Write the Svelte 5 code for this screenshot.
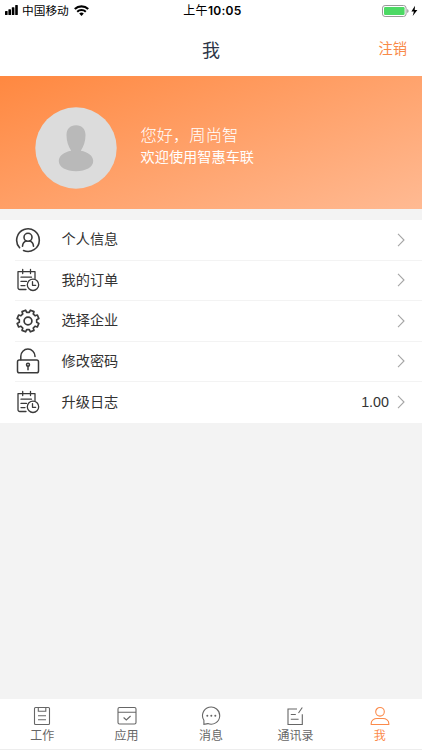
<script lang="ts">
  type MenuItem = { icon: string; label: string; value?: string };

  const menu: MenuItem[] = [
    { icon: 'user', label: '个人信息' },
    { icon: 'order', label: '我的订单' },
    { icon: 'gear', label: '选择企业' },
    { icon: 'lock', label: '修改密码' },
    { icon: 'order', label: '升级日志', value: '1.00' },
  ];

  const tabs = [
    { id: 'work', label: '工作' },
    { id: 'apps', label: '应用' },
    { id: 'message', label: '消息' },
    { id: 'contacts', label: '通讯录' },
    { id: 'me', label: '我' },
  ];

  let active = $state('me');

  // eight teeth, four corners each: [angle offset, radius]
  function gearPath(cx: number, cy: number) {
    const corners = [[-14, 8.8], [-10, 11.1], [10, 11.1], [14, 8.8]];
    const points: string[] = [];
    for (let i = 0; i < 8; i++) {
      for (const [offset, r] of corners) {
        const a = ((i * 45 + 22.5 + offset) * Math.PI) / 180;
        points.push((cx + r * Math.cos(a)).toFixed(2) + ' ' + (cy + r * Math.sin(a)).toFixed(2));
      }
    }
    return 'M' + points.join('L') + 'z';
  }
</script>

<div class="screen">
  <div class="status-bar">
    <div class="carrier">
      <svg width="13" height="10" viewBox="0 0 13 10">
        <rect x="0" y="6" width="2.6" height="4" rx="0.6"/>
        <rect x="3.4" y="4.2" width="2.6" height="5.8" rx="0.6"/>
        <rect x="6.8" y="2.2" width="2.6" height="7.8" rx="0.6"/>
        <rect x="10.2" y="0" width="2.6" height="10" rx="0.6"/>
      </svg>
      <span>中国移动</span>
      <svg class="wifi" width="15" height="11" viewBox="0 0 15 11">
        <path d="M.8 4a9.600 9.600 0 0 1 13.400 0" fill="none" stroke="#000" stroke-width="2.2"/>
        <path d="M3.200 6.700a6.200 6.200 0 0 1 8.600 0" fill="none" stroke="#000" stroke-width="2"/>
        <path d="M5.200 8.500a3.300 3.300 0 0 1 4.600 0L7.500 11z"/>
      </svg>
    </div>
    <span class="time">上午<b>10:05</b></span>
    <div class="power">
      <svg width="36" height="12" viewBox="0 0 36 12">
        <rect x="0.5" y="0.5" width="23.6" height="11" rx="2.6" fill="#fff" stroke="#999"/>
        <rect x="2" y="2" width="20.6" height="8" rx="1.2" fill="#4cd964"/>
        <path d="M25.2 4v4q1.4-.6 1.4-2t-1.4-2z" fill="#999"/>
        <path d="M33 .8L29.4 6.6h2.5L30.7 11l4.7-6h-2.7z"/>
      </svg>
    </div>
  </div>

  <header class="nav">
    <h1>我</h1>
    <button class="logout">注销</button>
  </header>

  <section class="profile">
    <svg class="avatar" width="82" height="82" viewBox="0 0 82 82">
      <circle cx="41" cy="41" r="40.7" fill="#dcdcdc"/>
      <path d="M41 18.3c6 0 9.5 3.8 9.5 9.8 0 6.200-1.800 11.500-4.700 15.700C53 45 58.200 49 58.200 54c0 6-7.500 10.300-17.200 10.300S23.800 60 23.800 54c0-5 5.200-9 12.400-10.200C33.300 39.600 31.500 34.300 31.500 28.100c0-6 3.500-9.800 9.500-9.800z" fill="#b9b9b9"/>
    </svg>
    <div class="greeting">
      <p class="name">您好，周尚智</p>
      <p class="welcome">欢迎使用智惠车联</p>
    </div>
  </section>

  <ul class="menu">
    {#each menu as item}
      <li>
        <svg class="menu-icon" width="26" height="26" viewBox="0 0 26 26">
          {#if item.icon === 'user'}
            <path d="M4.600 20.700A11.300 11.300 0 1 1 8.500 23.500" stroke-width="1.6"/>
            <circle cx="13" cy="10.300" r="4" stroke-width="1.600"/>
            <path d="M7.500 19.300c.2-3 1.700-4.800 4-5.300M18.500 19.300c-.2-3-1.700-4.800-4-5.300" stroke-width="1.600"/>
          {:else if item.icon === 'order'}
            <path d="M11 22.500H4.800a1.800 1.800 0 0 1-1.800-1.800V4.600h17V11.500M7.700 2.500v4M15.500 2.500v4"/>
            <path d="M6 10.200h10.500M6 14.400h5.500M6 18.600h4"/>
            <circle cx="18" cy="17.800" r="5.700"/>
            <path d="M17.500 14.600v3.700h3.200"/>
          {:else if item.icon === 'gear'}
            <path d={gearPath(13, 13)} stroke-width="1.700"/>
            <circle cx="13" cy="13" r="3.900" stroke-width="1.700"/>
          {:else}
            <rect x="2.500" y="12" width="21" height="12.800" rx="1.800" stroke-width="1.500"/>
            <path d="M5.800 11.800V8.200a7.100 7.100 0 0 1 14.200 0v.4" stroke-width="1.500"/>
            <circle cx="13" cy="16.700" r="1.500" stroke-width="1.500"/>
            <path d="M13 18v3.800" stroke-width="1.500"/>
          {/if}
        </svg>
        <span class="label">{item.label}</span>
        {#if item.value}
          <span class="value">{item.value}</span>
        {/if}
        <svg class="arrow" width="8" height="14" viewBox="0 0 8 14">
          <path d="M1 .9l6 6.100-6 6.100"/>
        </svg>
      </li>
    {/each}
  </ul>

  <nav class="tabs">
    {#each tabs as tab}
      <button class="tab" class:active={active === tab.id} onclick={() => active = tab.id}>
        <svg width="20" height="20" viewBox="0 0 20 20">
          {#if tab.id === 'work'}
            <rect x="2.500" y="1.500" width="15" height="17" rx="1"/>
            <path d="M6.300 1.500v3.700h7.500V1.500M6 9.700h8M6 13.700h8"/>
          {:else if tab.id === 'apps'}
            <rect x="1" y="1.500" width="18" height="16.500" rx="1.500"/>
            <path d="M1 6.200h18M6.600 11.500l2.700 2.500 4.300-4"/>
          {:else if tab.id === 'message'}
            <path d="M2.900 18.300v-4a8.600 8.600 0 1 1 4 3.300z"/>
            <g class="dots">
              <circle cx="6.300" cy="9.800" r="1"/>
              <circle cx="10.300" cy="9.800" r="1"/>
              <circle cx="14.300" cy="9.800" r="1"/>
            </g>
          {:else if tab.id === 'contacts'}
            <path d="M12 3H3v15.500h14.300V8.300M5.800 8.500h5M5.800 13.300h7.800M17.300 1.500l-3.800 5.500"/>
          {:else}
            <circle cx="10" cy="5.800" r="4.300"/>
            <path d="M1.200 18.500v-1.300c0-2.600 2.700-4.700 5.800-4.700h6c3.100 0 5.800 2.100 5.800 4.700v1.300z"/>
          {/if}
        </svg>
        <span>{tab.label}</span>
      </button>
    {/each}
  </nav>
</div>

<style>
  :global(body) {
    margin: 0;
    background: #f3f3f3;
  }

  .screen {
    display: flex;
    flex-direction: column;
    height: 750px;
    background: #f3f3f3;
    color: #333;
    font-family: "Noto Sans CJK SC", sans-serif;
  }

  button {
    padding: 0;
    border: none;
    background: none;
    font-family: inherit;
    cursor: pointer;
  }

  .status-bar {
    display: grid;
    grid-template-columns: 1fr auto 1fr;
    align-items: center;
    height: 21px;
    padding: 0 4px 0 5px;
    background: #fff;
    color: #000;
    font-size: 12px;
    line-height: 20px;
  }

  .carrier {
    display: flex;
    align-items: center;
    gap: 4px;
    font-size: 11.700px;
    line-height: 18px;
    padding-bottom: 1px;
  }

  .wifi {
    margin-left: 1px;
  }

  .time {
    padding-left: 2px;
    font-family: Inter, "Noto Sans CJK SC", sans-serif;
    letter-spacing: 0.3px;
  }

  .time b {
    font-weight: 600;
  }

  .power {
    display: flex;
    justify-content: flex-end;
  }

  .nav {
    display: grid;
    grid-template-columns: 1fr auto 1fr;
    align-items: center;
    height: 55px;
    padding: 0 15px;
    box-sizing: border-box;
    background: #fff;
  }

  h1 {
    grid-column: 2;
    margin: 0;
    color: #2c3548;
    font-size: 18px;
    font-weight: 400;
    line-height: 26px;
  }

  .logout {
    justify-self: end;
    color: #f98a48;
    font-size: 14.300px;
    font-weight: 400;
    line-height: 20px;
    padding-bottom: 1px;
  }

  .profile {
    display: flex;
    align-items: center;
    gap: 23.500px;
    height: 133px;
    padding: 10px 0 0 35px;
    box-sizing: border-box;
    background: linear-gradient(160deg, #ff8840 0%, #ffba93 100%);
    color: #fff;
  }

  .greeting {
    margin-top: -5px;
  }

  .greeting p {
    margin: 0;
  }

  .greeting .name {
    font-size: 16.300px;
    font-weight: 300;
    line-height: 22px;
  }

  .greeting .welcome {
    font-size: 14.200px;
    line-height: 22px;
  }

  .menu {
    margin: 11px 0 0;
    padding: 0;
    background: #fff;
    list-style: none;
  }

  .menu li {
    display: flex;
    align-items: center;
    height: 40.500px;
    margin-left: 15px;
    padding-right: 17px;
    box-sizing: border-box;
    border-bottom: 1px solid #f3f3f3;
    font-size: 14.200px;
  }

  .menu li:last-child {
    border-bottom: none;
  }

  .menu-icon {
    fill: none;
    stroke: #3a3a3a;
    stroke-width: 1.3;
    stroke-linecap: round;
    stroke-linejoin: round;
  }

  .label {
    flex: 1;
    margin-left: 20.500px;
    padding-bottom: 3px;
    line-height: 20px;
  }

  .value {
    margin-right: 8px;
    padding-bottom: 1px;
    font-family: "Liberation Sans", sans-serif;
    font-size: 14.300px;
  }

  .arrow {
    fill: none;
    stroke: #a5a5a5;
    stroke-width: 1.1;
  }

  .tabs {
    display: flex;
    height: 51px;
    margin-top: auto;
    box-sizing: border-box;
    border-bottom: 1px solid #ededed;
    background: #fff;
  }

  .tab {
    display: flex;
    flex: 1;
    flex-direction: column;
    align-items: center;
    padding-top: 7px;
    color: #666;
    font-size: 12px;
    line-height: 18px;
  }

  .tab.active {
    color: #fb8a4a;
  }

  .tab svg {
    fill: none;
    stroke: currentColor;
    stroke-width: 1.1;
  }

  .dots {
    fill: currentColor;
    stroke: none;
  }
</style>
